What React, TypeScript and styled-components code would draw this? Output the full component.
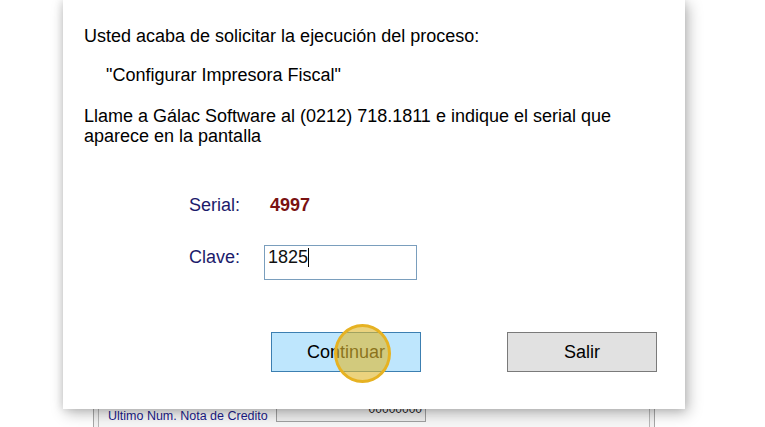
import React from "react";
import styled, { createGlobalStyle } from "styled-components";

const Global = createGlobalStyle`
  html, body { margin: 0; padding: 0; background: #ffffff; }
  body { width: 765px; height: 427px; overflow: hidden; font-family: "Liberation Sans", Arial, sans-serif; }
`;

const Desktop = styled.div`
  position: relative;
  width: 765px;
  height: 427px;
  overflow: hidden;
  background: #ffffff;
`;

const BackWindow = styled.div`
  position: absolute;
  left: 93px;
  top: 380px;
  width: 562px;
  height: 80px;
  border-left: 1px solid #a8a8a8;
  border-right: 1px solid #a8a8a8;
  background: #f3f3f3;
  padding: 0 4px;
  box-sizing: border-box;
  display: flex;
`;

const BackPanel = styled.div`
  flex: 1;
  border-left: 1px solid #b8b8b8;
  border-right: 1px solid #b8b8b8;
  background: #f7f7f7;
  display: flex;
  align-items: flex-start;
  padding: 23px 0 0 9px;
  gap: 0;
`;

const BackLabel = styled.span`
  font-size: 12.5px;
  color: #1c1c8c;
  width: 168px;
  margin-top: 6px;
`;

const BackInput = styled.div`
  width: 150px;
  height: 19px;
  border: 1px solid #a0a0a0;
  background: #efefef;
  font-size: 12px;
  color: #222;
  text-align: right;
  padding: 0 3px;
  box-sizing: border-box;
  line-height: 10px;
`;

const Dialog = styled.div`
  position: absolute;
  left: 63px;
  top: 0;
  width: 622px;
  height: 409px;
  background: #ffffff;
  box-shadow: 3px 4px 14px rgba(0, 0, 0, 0.28), -1px 0 8px rgba(0, 0, 0, 0.12);
  display: flex;
  flex-direction: column;
  padding: 26px 0 0 21px;
  box-sizing: border-box;
  color: #000;
  font-size: 18px;
  line-height: 20px;
`;

const Para = styled.div<{ $indent?: number; $mt?: number }>`
  margin-left: ${(p) => p.$indent ?? 0}px;
  margin-top: ${(p) => p.$mt ?? 0}px;
`;

const FieldRow = styled.div<{ $mt: number }>`
  display: flex;
  align-items: flex-start;
  margin-top: ${(p) => p.$mt}px;
  margin-left: 105px;
`;

const FieldLabel = styled.span<{ $w: number; $mt?: number }>`
  color: #1b1b6b;
  width: ${(p) => p.$w}px;
  margin-top: ${(p) => p.$mt ?? 0}px;
  flex: none;
`;

const SerialValue = styled.span`
  color: #7a1212;
  font-weight: bold;
`;

const KeyBox = styled.div`
  width: 153px;
  height: 35px;
  box-sizing: border-box;
  border: 1px solid #7a9ebd;
  padding: 1px 3px;
  display: flex;
  align-items: flex-start;
  color: #111;
`;

const Caret = styled.span`
  display: inline-block;
  width: 1px;
  height: 19px;
  background: #000;
  margin-top: 1px;
`;

const ButtonRow = styled.div`
  display: flex;
  margin-top: 52px;
  margin-left: 187px;
  gap: 86px;
`;

const Button = styled.div<{ $primary?: boolean }>`
  width: 150px;
  height: 40px;
  box-sizing: border-box;
  border: 1px solid ${(p) => (p.$primary ? "#3c7fb1" : "#7a7a7a")};
  background: ${(p) => (p.$primary ? "#bee6fd" : "#e1e1e1")};
  display: flex;
  align-items: center;
  justify-content: center;
  font-size: 18px;
  color: #000;
`;

const ClickMark = styled.div`
  position: absolute;
  left: 334px;
  top: 324px;
  width: 57px;
  height: 59px;
  box-sizing: border-box;
  border-radius: 50%;
  border: 3px solid #e6b222;
  background: rgba(222, 184, 46, 0.62);
`;

export default function App() {
  return (
    <>
      <Global />
      <Desktop>
        <BackWindow>
          <BackPanel>
            <BackLabel>Ultimo Num. Nota de Credito</BackLabel>
            <BackInput>00000000</BackInput>
          </BackPanel>
        </BackWindow>
        <Dialog>
          <Para>Usted acaba de solicitar la ejecución del proceso:</Para>
          <Para $indent={22} $mt={19}>"Configurar Impresora Fiscal"</Para>
          <Para $mt={21}>
            Llame a Gálac Software al (0212) 718.1811 e indique el serial que
            <br />
            aparece en la pantalla
          </Para>
          <FieldRow $mt={49}>
            <FieldLabel $w={81}>Serial:</FieldLabel>
            <SerialValue>4997</SerialValue>
          </FieldRow>
          <FieldRow $mt={30}>
            <FieldLabel $w={75} $mt={2}>Clave:</FieldLabel>
            <KeyBox>
              1825
              <Caret />
            </KeyBox>
          </FieldRow>
          <ButtonRow>
            <Button $primary>Continuar</Button>
            <Button>Salir</Button>
          </ButtonRow>
        </Dialog>
        <ClickMark />
      </Desktop>
    </>
  );
}
